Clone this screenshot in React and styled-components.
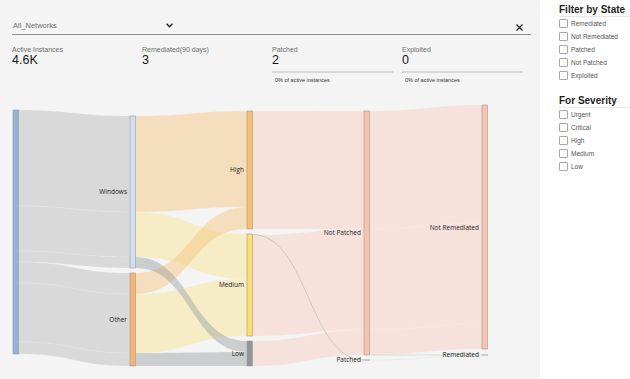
import React from 'react';
import styled, { createGlobalStyle } from 'styled-components';

const GlobalStyle = createGlobalStyle`
  html, body { margin: 0; padding: 0; background: #ffffff; }
  body { font-family: "Liberation Sans", Arial, sans-serif; }
  #root { width: 630px; height: 379px; overflow: hidden; }
`;

const Page = styled.div`
  display: flex;
  width: 630px;
  height: 379px;
`;

const Main = styled.main`
  width: 540px;
  height: 379px;
  background: #f4f4f4;
  display: flex;
  flex-direction: column;
`;

const Header = styled.div`
  margin: 16px 9px 0 12px;
  height: 18px;
  display: flex;
  align-items: center;
  border-bottom: 1.5px solid #8d8d8d;
`;

const Select = styled.div`
  width: 160px;
  padding-left: 1px;
  display: flex;
  align-items: center;
  justify-content: space-between;
  font-size: 7.5px;
  color: #6f6f6f;
`;

const Close = styled.div`
  margin-left: auto;
  margin-right: 8px;
  margin-top: 4px;
  display: flex;
`;

const Stats = styled.div`
  display: grid;
  grid-template-columns: repeat(4, 121px);
  column-gap: 9px;
  margin: 10px 0 0 12px;
`;

const Stat = styled.div`
  display: flex;
  flex-direction: column;
`;

const StatLabel = styled.div`
  font-size: 7px;
  line-height: 9px;
  color: #6f6f6f;
`;

const StatValue = styled.div`
  font-size: 12.5px;
  line-height: 13px;
  color: #161616;
`;

const Bar = styled.div`
  height: 2px;
  margin-top: 4px;
  background: #d8d8d8;
`;

const Note = styled.div`
  margin-top: 4px;
  padding-left: 3px;
  font-size: 5.5px;
  line-height: 7px;
  color: #333;
`;

const Chart = styled.svg`
  display: block;
  margin-top: auto;
  flex: none;
`;

const Sidebar = styled.aside`
  flex: 1;
  background: #ffffff;
  padding: 3px 0 0 19px;
`;

const Group = styled.section`
  margin-top: ${p => p.$gap || 0}px;
`;

const GroupTitle = styled.div`
  font-size: 10px;
  font-weight: bold;
  line-height: 13px;
  color: #1e1e1e;
  border-bottom: 1px solid #e6e6e6;
`;

const Row = styled.label`
  display: flex;
  align-items: center;
  height: 13px;
  font-size: 6.5px;
  color: #555;
`;

const Box = styled.span`
  width: 9px;
  height: 9px;
  box-sizing: border-box;
  border: 1px solid #a8a8a8;
  border-radius: 1px;
  background: #fff;
  margin-right: 3px;
  flex: none;
`;

const NW = 5.5;

const NODES = [
  { x: 13, y0: 110, y1: 354, fill: '#8db5da' },
  { x: 130, y0: 116, y1: 268, fill: '#cfe0f4', label: 'Windows', ly: 192 },
  { x: 130, y0: 273, y1: 366, fill: '#f7b26d', label: 'Other', ly: 320 },
  { x: 247, y0: 111, y1: 229, fill: '#fbbe6c', label: 'High', ly: 170 },
  { x: 247, y0: 234, y1: 336, fill: '#fbe06e', label: 'Medium', ly: 285 },
  { x: 247, y0: 341, y1: 366, fill: '#8d9797', label: 'Low', ly: 354 },
  { x: 364, y0: 111, y1: 355, fill: '#f8c3ae', label: 'Not Patched', ly: 233 },
  { x: 482, y0: 105, y1: 349, fill: '#f8c3ae', label: 'Not Remediated', ly: 228 },
];

const COLORS = {
  gray: { fill: '#c6c6c6', op: 0.6 },
  orange: { fill: '#f8be6e', op: 0.4 },
  yellow: { fill: '#fadf72', op: 0.35 },
  slate: { fill: '#8c9696', op: 0.4 },
  pink: { fill: '#f9c4b0', op: 0.38 },
};

const LINKS = [
  [18, 110, 206, 130, 116, 212, 'gray'],
  [18, 206, 251, 130, 212, 257, 'gray'],
  [18, 251, 262, 130, 257, 268, 'gray'],
  [18, 262, 283, 130, 273, 294, 'gray'],
  [18, 283, 342, 130, 294, 353, 'gray'],
  [18, 342, 354, 130, 353, 366, 'gray'],
  [135.5, 116, 212, 247, 111, 207, 'orange'],
  [135.5, 212, 257, 247, 234, 279, 'yellow'],
  [135.5, 294, 353, 247, 279, 336, 'yellow'],
  [135.5, 273, 294, 247, 207, 229, 'orange'],
  [135.5, 257, 268, 247, 341, 352, 'slate'],
  [135.5, 353, 366, 247, 352, 366, 'slate'],
  [252.5, 111, 229, 364, 111, 229, 'pink'],
  [252.5, 235, 336, 364, 229, 330, 'pink'],
  [252.5, 341, 366, 364, 330, 355, 'pink'],
  [369.5, 111, 229, 482, 105, 223, 'pink'],
  [369.5, 229, 330, 482, 223, 324, 'pink'],
  [369.5, 330, 355, 482, 324, 349, 'pink'],
];

function linkPath(sx, s0, s1, tx, t0, t1) {
  const m = (sx + tx) / 2;
  return `M${sx},${s0} C${m},${s0} ${m},${t0} ${tx},${t0} L${tx},${t1} C${m},${t1} ${m},${s1} ${sx},${s1} Z`;
}

function curve(sx, sy, tx, ty) {
  const m = (sx + tx) / 2;
  return `M${sx},${sy} C${m},${sy} ${m},${ty} ${tx},${ty}`;
}

const SankeyLabel = styled.text`
  font-family: "Open Sans", "Liberation Sans", sans-serif;
  font-size: 6.5px;
  fill: #222;
`;

function Sankey() {
  return (
    <Chart width="540" height="279" viewBox="0 100 540 279">
      {LINKS.map(([sx, s0, s1, tx, t0, t1, c], i) => (
        <path
          key={i}
          d={linkPath(sx, s0, s1, tx, t0, t1)}
          fill={COLORS[c].fill}
          fillOpacity={COLORS[c].op}
          stroke="#f4f4f4"
          strokeOpacity="0.35"
          strokeWidth="0.5"
        />
      ))}
      <path d={curve(252.5, 234.5, 364, 360)} fill="none" stroke="#cfcab3" strokeWidth="1" />
      <path d={curve(369.5, 355, 482, 355)} fill="none" stroke="#cfe0d6" strokeWidth="1.2" />
      <path d={curve(369.5, 360, 482, 355.5)} fill="none" stroke="#e2e8e2" strokeWidth="0.8" />
      {NODES.map((n, i) => (
        <rect
          key={i}
          x={n.x}
          y={n.y0}
          width={NW}
          height={n.y1 - n.y0}
          fill={n.fill}
          stroke="#9a9a9a"
          strokeWidth="0.6"
        />
      ))}
      <line x1="364" y1="360" x2="370" y2="360" stroke="#8a8a8a" strokeWidth="0.8" />
      <line x1="482" y1="355" x2="488" y2="355" stroke="#8a8a8a" strokeWidth="0.8" />
      {NODES.filter(n => n.label).map((n, i) => (
        <SankeyLabel key={i} x={n.x - 3} y={n.ly} textAnchor="end" dominantBaseline="middle">
          {n.label}
        </SankeyLabel>
      ))}
      <SankeyLabel x={361} y={360} textAnchor="end" dominantBaseline="middle">Patched</SankeyLabel>
      <SankeyLabel x={479} y={355} textAnchor="end" dominantBaseline="middle">Remediated</SankeyLabel>
    </Chart>
  );
}

const STATS = [
  { label: 'Active Instances', value: '4.6K' },
  { label: 'Remediated(90 days)', value: '3' },
  { label: 'Patched', value: '2', note: '0% of active instances' },
  { label: 'Exploited', value: '0', note: '0% of active instances' },
];

const STATE_FILTERS = ['Remediated', 'Not Remediated', 'Patched', 'Not Patched', 'Exploited'];
const SEVERITY_FILTERS = ['Urgent', 'Critical', 'High', 'Medium', 'Low'];

function FilterGroup({ title, items, gap }) {
  return (
    <Group $gap={gap}>
      <GroupTitle>{title}</GroupTitle>
      {items.map(it => (
        <Row key={it}>
          <Box />
          {it}
        </Row>
      ))}
    </Group>
  );
}

export default function App() {
  return (
    <>
      <GlobalStyle />
      <Page>
        <Main>
          <Header>
            <Select>
              <span>All_Networks</span>
              <svg width="7" height="5" viewBox="0 0 7 5">
                <path d="M0.6 0.8 L3.5 3.8 L6.4 0.8" fill="none" stroke="#222" strokeWidth="1.3" />
              </svg>
            </Select>
            <Close>
              <svg width="7" height="7" viewBox="0 0 7 7">
                <path d="M0.5 0.5 L6.5 6.5 M6.5 0.5 L0.5 6.5" stroke="#222" strokeWidth="1.2" />
              </svg>
            </Close>
          </Header>
          <Stats>
            {STATS.map(s => (
              <Stat key={s.label}>
                <StatLabel>{s.label}</StatLabel>
                <StatValue>{s.value}</StatValue>
                {s.note && (
                  <>
                    <Bar />
                    <Note>{s.note}</Note>
                  </>
                )}
              </Stat>
            ))}
          </Stats>
          <Sankey />
        </Main>
        <Sidebar>
          <FilterGroup title="Filter by State" items={STATE_FILTERS} />
          <FilterGroup title="For Severity" items={SEVERITY_FILTERS} gap={12} />
        </Sidebar>
      </Page>
    </>
  );
}
